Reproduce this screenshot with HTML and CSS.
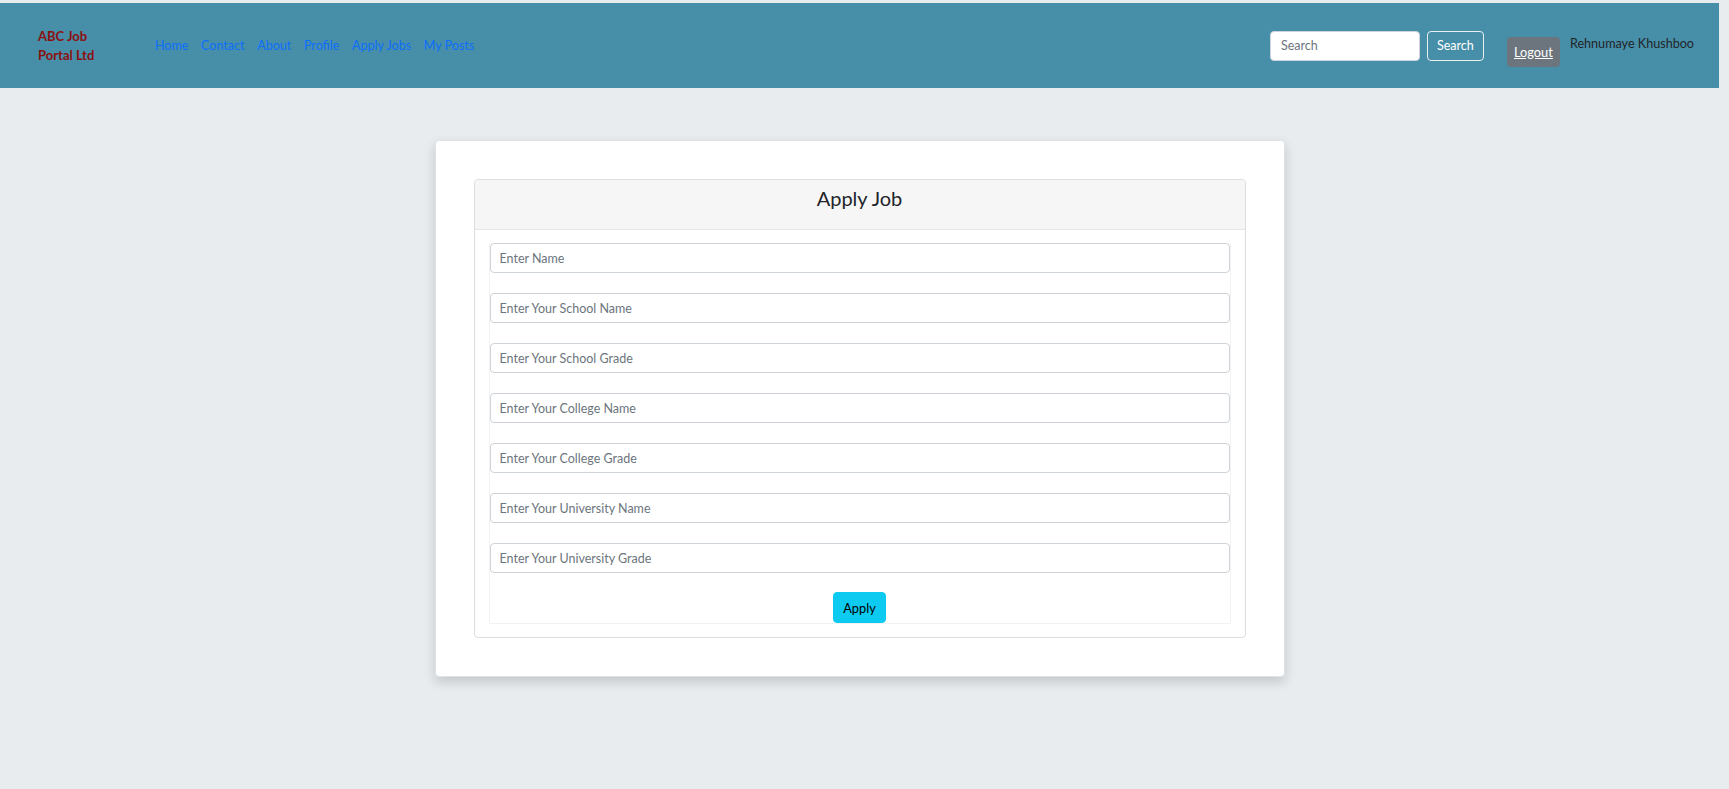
FILE: index.html
```html
<!DOCTYPE html>
<html lang="en">
<head>
<meta charset="utf-8">
<title>ABC Job Portal Ltd - Apply Job</title>
<link rel="stylesheet" href="styles.css">
</head>
<body>
<div class="page">
  <nav class="navbar">
    <a class="brand" href="#">ABC Job Portal Ltd</a>
    <ul class="nav-links">
      <li><a href="#">Home</a></li>
      <li><a href="#">Contact</a></li>
      <li><a href="#">About</a></li>
      <li><a href="#">Profile</a></li>
      <li><a href="#">Apply Jobs</a></li>
      <li><a href="#">My Posts</a></li>
    </ul>
    <div class="nav-right">
      <form class="search-form">
        <input class="search-input" type="text" placeholder="Search">
        <button class="search-btn" type="button">Search</button>
      </form>
      <a class="logout" href="#">Logout</a>
      <span class="username">Rehnumaye Khushboo</span>
    </div>
  </nav>

  <main class="main">
    <section class="outer-card">
      <div class="inner-card">
        <div class="card-header">
          <h4 class="card-title">Apply Job</h4>
        </div>
        <div class="card-body">
          <form class="apply-form">
            <input class="field" type="text" placeholder="Enter Name">
            <input class="field" type="text" placeholder="Enter Your School Name">
            <input class="field" type="text" placeholder="Enter Your School Grade">
            <input class="field" type="text" placeholder="Enter Your College Name">
            <input class="field" type="text" placeholder="Enter Your College Grade">
            <input class="field" type="text" placeholder="Enter Your University Name">
            <input class="field" type="text" placeholder="Enter Your University Grade">
            <div class="actions">
              <button class="apply-btn" type="button">Apply</button>
            </div>
          </form>
        </div>
      </div>
    </section>
  </main>
</div>
</body>
</html>
```

FILE: styles.css
```css
* {
  box-sizing: border-box;
}

html, body {
  margin: 0;
  padding: 0;
}

body {
  background: #e8ecef;
  font-family: Lato, "Noto Sans", sans-serif;
  font-size: 12.5px;
  color: #212529;
  height: 789px;
  overflow: hidden;
}

.page {
  width: 1719px;
  padding-top: 3px;
}

/* ---------- navbar ---------- */
.navbar {
  height: 85px;
  background: #478ea8;
  display: flex;
  align-items: center;
  padding: 0 25px 0 38px;
}

.brand {
  width: 72px;
  flex-shrink: 0;
  font-weight: 700;
  font-size: 13px;
  line-height: 18.5px;
  color: #8b1111;
  text-decoration: none;
  margin-right: 38.6px;
}

.nav-links {
  list-style: none;
  margin: 0;
  padding: 0;
  display: flex;
}

.nav-links a {
  display: block;
  padding: 0 6.4px;
  color: #0d6efd;
  text-decoration: none;
  font-size: 12.5px;
  line-height: 20px;
}

.nav-right {
  margin-left: auto;
  display: flex;
  align-items: center;
}

.search-form {
  display: flex;
  gap: 7px;
  margin-right: 23px;
}

.search-input {
  width: 150px;
  height: 30px;
  border: 1px solid #ced4da;
  border-radius: 4px;
  padding: 0 10px;
  font-family: inherit;
  font-size: 12.5px;
  color: #212529;
  background: #fff;
}

.search-input::placeholder {
  color: #6c757d;
}

.search-btn {
  width: 57px;
  height: 30px;
  border: 1px solid #e9eef2;
  border-radius: 4px;
  background: transparent;
  color: #fff;
  font-family: inherit;
  font-size: 12.5px;
  padding: 0;
}

.logout {
  display: block;
  width: 53px;
  height: 30px;
  margin-top: 12px;
  line-height: 30px;
  text-align: center;
  background: #6c757d;
  color: #fff;
  border-radius: 4px;
  font-size: 12.8px;
  text-decoration: underline;
  margin-right: 10px;
}

.username {
  font-size: 12.6px;
  color: #212529;
  margin-top: -4px;
}

/* ---------- main card ---------- */
.main {
  display: flex;
  justify-content: center;
  padding-top: 52px;
}

.outer-card {
  width: 850px;
  background: #fff;
  border-radius: 4px;
  border: 1px solid #dfe3e6;
  box-shadow: 0 5px 12px rgba(0, 0, 0, 0.16);
  padding: 38px;
}

.inner-card {
  border: 1px solid #dcdfe2;
  border-radius: 4px;
  background: #fff;
}

.card-header {
  height: 50px;
  background: #f6f6f6;
  border-bottom: 1px solid #e4e6e8;
  border-radius: 4px 4px 0 0;
  display: flex;
  align-items: flex-start;
  justify-content: center;
  padding-top: 6px;
}

.card-title {
  margin: 0;
  font-weight: 400;
  font-size: 20px;
  line-height: 24px;
  color: #212529;
}

.card-body {
  padding: 13px 14px 13px 14px;
}

.apply-form {
  display: flex;
  flex-direction: column;
  gap: 20px;
  border: 1px solid #f2f2f2;
  border-top: none;
}

.field {
  display: block;
  width: 100%;
  height: 30px;
  border: 1px solid #ced4da;
  border-radius: 4px;
  padding: 0 9px;
  font-family: inherit;
  font-size: 12.5px;
  color: #212529;
  background: #fff;
}

.field::placeholder {
  color: #6c757d;
}

.actions {
  display: flex;
  justify-content: center;
  margin-top: -1px;
}

.apply-btn {
  width: 53px;
  height: 31px;
  background: #0dcaf0;
  border: 1px solid #0dcaf0;
  border-radius: 4px;
  color: #000;
  font-family: inherit;
  font-size: 12.8px;
  padding: 0;
}
```
